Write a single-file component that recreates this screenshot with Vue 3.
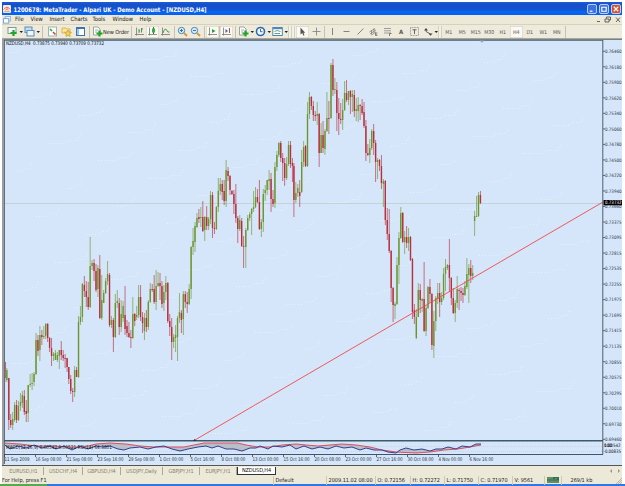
<template>
  <div class="screen">
    <div class="window">
      <!-- title bar -->
      <header class="titlebar">
        <svg class="app-icon" viewBox="0 0 9 9">
          <rect width="9" height="9" rx="1" fill="#f7e9e2" />
          <path d="M1 5 Q4.500 0 8 5 M3 6 L4.500 4 L6 6" fill="none" stroke="#e0604c" />
          <path d="M1.500 7.500 H7.500" stroke="#dba040" />
        </svg>
        <svg class="title" viewBox="0 0 260 13">
          <text x="0.500" y="9.500" textLength="193" lengthAdjust="spacingAndGlyphs">1200678: MetaTrader - Alpari UK - Demo Account - [NZDUSD,H4]</text>
        </svg>
        <div class="win-buttons">
          <span><svg viewBox="0 0 9 9"><path d="M2 7 H5" /></svg></span>
          <span><svg viewBox="0 0 9 9"><path d="M2 2.500 H7 V7 H2 Z" /></svg></span>
          <span class="close"><svg viewBox="0 0 9 9"><path d="M2 2 L7 7 M7 2 L2 7" /></svg></span>
        </div>
      </header>

      <!-- menu -->
      <nav class="menubar">
        <svg class="menu-icon" viewBox="0 0 9 9">
          <rect x="2.500" y="0.500" width="6" height="5" fill="#e8f2fc" stroke="#8cb4dc" />
          <rect x="0.500" y="3" width="6" height="5" fill="#fff" stroke="#6c9cd0" />
        </svg>
        <a v-for="m in menus" :key="m.name" :style="{ width: m.w + 'px' }">{{ m.name }}</a>
        <div class="mdi">
          <svg viewBox="0 0 30 9">
            <path d="M5 6.500 H8 M13 4 H17 V7 H13 Z M14.500 3.500 V2 H18.500 V5 H17 M24 2.500 L28 7 M28 2.500 L24 7" />
          </svg>
        </div>
      </nav>

      <!-- toolbar -->
      <div class="toolbar">
        <div
          v-for="(t, i) in tools"
          :key="i"
          class="tool"
          :class="{ active: t.on, sep: t.icon === 'sep', grip: t.icon === 'grip' }"
          :style="{ width: t.w + 'px' }"
        >
          <svg v-if="icons[t.icon]" :width="t.drop ? 16 : 11" height="11" :viewBox="t.drop ? '0 0 16 11' : '0 0 11 11'">
            <g v-html="icons[t.icon]"></g>
            <path v-if="t.drop" d="M12.500 5 h3.500 l-1.750 2 z" fill="#222" />
          </svg>
          <span v-if="t.text" :class="{ order: t.icon, letter: t.text === 'A' }">{{ t.text }}</span>
        </div>
      </div>

      <!-- chart -->
      <main class="chart">
        <svg width="619" height="426" viewBox="3 39 619 426">
          <rect x="4" y="40" width="618" height="425" fill="#d6e6fa" />
          <path v-for="(d, i) in dither" :key="'n' + i" :d="d" class="dither" />
          <path d="M5 203.500 H603" stroke="#c3d3d3" />

          <g v-for="(c, i) in candles" :key="i" :class="c.up ? 'up' : 'down'">
            <path :d="`M${c.x} ${c.h} V${c.l}`" class="wick" />
            <path :d="`M${c.x} ${c.top} V${c.bottom}`" class="body" />
          </g>

          <path d="M195 440 L603 202" stroke="#f04848" stroke-width="0.9" fill="none" />

          <!-- indicator -->
          <path :d="macdArea" fill="#b9bdc8" />
          <path d="M5 446.500 H603 M5 451.500 H603" stroke="#bfc9d8" stroke-width="0.6" stroke-dasharray="1 1" />
          <polyline :points="signal" fill="none" stroke="#e04050" stroke-width="0.9" />
          <polyline :points="macd" fill="none" stroke="#33408c" stroke-width="1" />
          <text x="6" y="448.500" class="axis dark" textLength="106" lengthAdjust="spacingAndGlyphs">MACD(12,26,9) 0.00542 0.00521 RSI(14) 64.3801</text>
          <text x="6" y="45.300" class="axis dark" textLength="98" lengthAdjust="spacingAndGlyphs">NZDUSD,H4&#160; 0.73875 0.73940 0.73709 0.73732</text>

          <!-- frame -->
          <path d="M4.500 40 V464" stroke="#607080" />
          <path d="M4 39.500 H622" stroke="#75828e" />
          <path d="M4 40.500 H603" stroke="#4b6474" stroke-width="0.8" />
          <path d="M602.800 40 V454.500" stroke="#4a6070" stroke-width="1" />
          <path d="M4 440.700 H603" stroke="#3c5a68" stroke-width="1.500" />
          <path d="M4 454.500 H603" stroke="#40566a" />
          <path d="M479.500 40.500 h5 l-2.500 2.300 z" fill="#98a8b4" />
          <path d="M193 441 l1.500 -2 l2 2 z" fill="#333" />

          <g v-for="(p, i) in prices" :key="p">
            <path :d="`M603 ${51.3 + i * 15.52} h2`" stroke="#445" stroke-width="0.8" />
            <text x="605" :y="53.1 + i * 15.52" class="axis price" textLength="16.500" lengthAdjust="spacingAndGlyphs">{{ p }}</text>
          </g>
          <rect x="603.500" y="200" width="18.500" height="5.300" fill="#000" />
          <text x="605" y="204.300" class="axis price light" textLength="16.500" lengthAdjust="spacingAndGlyphs">0.73732</text>
          <text x="604" y="447.300" class="axis price dark" textLength="16.500" lengthAdjust="spacingAndGlyphs">0.00542</text>
          <text x="604" y="446.500" class="axis price dark" textLength="8" lengthAdjust="spacingAndGlyphs">100</text>
          <text x="603.500" y="453" class="axis price dark" textLength="17.500" lengthAdjust="spacingAndGlyphs">-0.00835</text>

          <g v-for="(d, i) in dates" :key="d">
            <path :d="`M${4.5 + i * 31} 454 v3`" stroke="#445" stroke-width="0.8" />
            <text :x="4.5 + i * 31" y="461.300" class="axis" :textLength="i === 0 ? 25 : d.length * 2.17" lengthAdjust="spacingAndGlyphs">{{ d }}</text>
          </g>
        </svg>
      </main>

      <!-- chart tabs -->
      <div class="tabs">
        <div v-for="t in tabs" :key="t.name" class="tab" :class="{ current: t.on }" :style="{ width: t.w + 'px' }">
          <span>{{ t.name }}</span>
        </div>
        <svg class="scroll" viewBox="0 0 14 8"><path d="M4 2 L2 4 L4 6 Z M10 2 L12 4 L10 6 Z" /></svg>
      </div>

      <!-- status bar -->
      <footer class="status">
        <div v-for="s in status" :key="s.text" class="cell" :style="{ width: s.w + 'px' }">{{ s.text }}</div>
        <div class="cell bars">
          <svg viewBox="0 0 12 6">
            <rect width="12" height="6" fill="#2e7058" />
            <path d="M1 0 V6 M3 0 V6 M5 0 V6 M7 2 V6 M9 1 V6 M11 3 V6" stroke="#a4c860" stroke-width="0.8" />
            <path d="M0 3 H12" stroke="#30507c" stroke-width="0.7" />
          </svg>
        </div>
        <div class="cell traffic">269/1 kb</div>
        <svg class="resize" viewBox="0 0 7 7"><path d="M1 7 L7 1 M3 7 L7 3 M5 7 L7 5" /></svg>
      </footer>
    </div>
    <div class="taskbar"><i></i></div>
  </div>
</template>

<script setup>
const menus = [
  { name: 'File', w: 15.5 },
  { name: 'View', w: 19 },
  { name: 'Insert', w: 21 },
  { name: 'Charts', w: 22 },
  { name: 'Tools', w: 20 },
  { name: 'Window', w: 27 },
  { name: 'Help', w: 20 }
]

const axisIcon = '<path d="M2.500 1.500 V9.500 M1 8.500 H10" stroke="#777" fill="none" stroke-width="0.800"/>'
const lens = '<circle cx="4.500" cy="4.500" r="3.200" fill="#d4ecfa" stroke="#4e88b8"/><path d="M7 7 L10 10" stroke="#d09a38" stroke-width="1.800"/>'

const icons = {
  newChart: '<rect x="1" y="1.500" width="8" height="6" fill="#f4faff" stroke="#7d9a90"/><path d="M6.500 4 V10 M3.500 7 H9.500" stroke="#22a32c" stroke-width="2.200"/>',
  profiles: '<rect x="1" y="1" width="7" height="5.500" fill="#c4dcf0" stroke="#5d8cb6"/><rect x="3" y="4.500" width="7" height="5.500" fill="#eef6ff" stroke="#5d8cb6"/>',
  market: '<rect x="1.500" y="1" width="8" height="9" fill="#fff" stroke="#9ab8ac"/><path d="M3 3 L5 5" stroke="#26a33c" stroke-width="1.600"/><path d="M6 6 L8.500 8.500" stroke="#d8443a" stroke-width="1.600"/>',
  navigator: '<path d="M1 2 H5 L6 3 H9 V7 H1 Z" fill="#ffe596" stroke="#caa038" stroke-width="0.700"/><path d="M7 4 L8 6 L10.500 6.300 L8.800 8 L9.200 10.500 L7 9.300 L5 10.500 L5.300 8 L3.500 6.300 L6 6 Z" fill="#f5cf45" stroke="#b9942c" stroke-width="0.600"/>',
  terminal: '<rect x="1.500" y="1.500" width="8" height="8" fill="#fff" stroke="#3a75b5"/><path d="M1.500 2.500 H9.500" stroke="#3a75b5"/><rect x="2" y="3" width="2" height="6" fill="#9cc4ec"/>',
  order: '<path d="M1.500 1 H6 L8 3 V9 H1.500 Z" fill="#fff" stroke="#80908a" stroke-width="0.800"/><path d="M3 4 H6 M3 6 H5" stroke="#888" stroke-width="0.700"/><path d="M7.500 4.500 V10.500 M4.500 7.500 H10.500" stroke="#22a32c" stroke-width="2.200"/>',
  bars: axisIcon + '<path d="M5 3 V7 M7.500 2 V6.500 M5 5 H6 M7.500 3 H9" stroke="#3b8b4a" stroke-width="0.900"/>',
  candle: axisIcon + '<path d="M6.500 1 V8" stroke="#2b7b34"/><rect x="5" y="2.500" width="3" height="4" fill="#35b044"/>',
  line: axisIcon + '<path d="M3 7 Q5 1 6.500 4 T9.500 6" stroke="#3b9b4a" fill="none"/>',
  zoomIn: lens + '<path d="M3 4.500 H6 M4.500 3 V6" stroke="#286898" stroke-width="0.900"/>',
  zoomOut: lens + '<path d="M3 4.500 H6" stroke="#286898" stroke-width="0.900"/>',
  scroll: axisIcon + '<path d="M5 3 L8.500 5 L5 7 Z" fill="#28a038"/>',
  shift: axisIcon + '<path d="M4.500 3 L7 5 L4.500 7 Z" fill="#3d6a9e"/><path d="M8.500 2 V7" stroke="#c04c48"/>',
  clock: '<circle cx="5.500" cy="5.500" r="4" fill="#eef7ff" stroke="#2a69b8" stroke-width="1.600"/><path d="M5.500 3 V5.700 H7.500" stroke="#345" fill="none" stroke-width="0.800"/>',
  template: '<rect x="0.800" y="1.500" width="9.500" height="8" fill="#fff" stroke="#4e86b8"/><path d="M1 2.500 H10" stroke="#4e86b8" stroke-width="1.400"/><path d="M2.500 5.500 L5 4.500 L8.500 5.500 M2.500 7.500 H8" stroke="#5a9a6a" fill="none" stroke-width="0.900"/>',
  cursor: '<path d="M3.500 1.500 V8.500 L5.200 7 L6.500 9.700 L7.500 9.200 L6.500 6.700 H8.200 Z" fill="#555"/>',
  cross: '<path d="M5.500 1.500 V9.500 M1.500 5.500 H9.500" stroke="#888" stroke-width="0.900"/>',
  vline: '<path d="M5.500 2 V9" stroke="#777" stroke-width="0.900"/>',
  hline: '<path d="M2.500 5.500 H8.500" stroke="#777" stroke-width="0.900"/>',
  trend: '<path d="M2.500 8.500 L8.500 2.500" stroke="#777" stroke-width="0.900"/>',
  channel: '<path d="M1.500 6 L7 2.500 M2 8 L8 4 M3.500 9 L8 6 M3.500 4 V8.500 M6 2.500 V7" stroke="#777" stroke-width="0.700"/><path d="M9.500 7 H7.500 V9.500 H9.500 M7.500 8.300 H9" stroke="#666" fill="none" stroke-width="0.700"/>',
  fibo: '<path d="M2 2.500 H9 M2 4.800 H9 M2 7 H9" stroke="#888" stroke-width="0.800"/><path d="M7.500 10 V7.500 H9.500" stroke="#666" fill="none" stroke-width="0.800"/>',
  label: '<rect x="1.500" y="1.500" width="8" height="8" fill="none" stroke="#888" stroke-width="0.800" stroke-dasharray="1 0.600"/><path d="M3.500 3.800 H7.500 M5.500 3.500 V8" stroke="#666"/>',
  arrows: '<path d="M4 2 L6 4.500 H2 Z M6.500 7.500 H10.500 L8.500 9.800 Z" fill="#444"/><path d="M4 4 V5.500 L8.500 8" stroke="#555" fill="none" stroke-width="0.900"/>'
}

const tools = [
  { icon: 'newChart', w: 17, drop: true },
  { icon: 'profiles', w: 17, drop: true },
  { icon: 'sep', w: 5 },
  { icon: 'market', w: 14 },
  { icon: 'navigator', w: 14 },
  { icon: 'terminal', w: 14 },
  { icon: 'sep', w: 4 },
  { icon: 'order', w: 39, text: 'New Order' },
  { icon: 'sep', w: 3 },
  { icon: 'bars', w: 13 },
  { icon: 'candle', w: 13, on: true },
  { icon: 'line', w: 13 },
  { icon: 'sep', w: 4 },
  { icon: 'zoomIn', w: 13 },
  { icon: 'zoomOut', w: 13 },
  { icon: 'sep', w: 4 },
  { icon: 'scroll', w: 13, on: true },
  { icon: 'sep', w: 1 },
  { icon: 'shift', w: 13, on: true },
  { icon: 'sep', w: 4 },
  { icon: 'order', w: 17, drop: true },
  { icon: 'clock', w: 17, drop: true },
  { icon: 'template', w: 17, drop: true },
  { icon: 'grip', w: 8 },
  { icon: 'cursor', w: 13, on: true },
  { icon: 'cross', w: 14 },
  { icon: 'sep', w: 3 },
  { icon: 'vline', w: 13 },
  { icon: 'hline', w: 14 },
  { icon: 'trend', w: 14 },
  { icon: 'channel', w: 13 },
  { icon: 'fibo', w: 14 },
  { text: 'A', w: 14 },
  { icon: 'label', w: 13 },
  { icon: 'arrows', w: 17, drop: true },
  { icon: 'grip', w: 4 },
  { text: 'M1', w: 13.5 },
  { text: 'M5', w: 13.5 },
  { text: 'M15', w: 13.5 },
  { text: 'M30', w: 13.5 },
  { text: 'H1', w: 13.5 },
  { text: 'H4', w: 13.5, on: true },
  { text: 'D1', w: 13.5 },
  { text: 'W1', w: 13.5 },
  { text: 'MN', w: 13.5 },
  { icon: 'sep', w: 3 }
]

// start x, then high/open/close/low for each bar (in chart pixels)
const step = 1.943
const series = [
  [4.9, '362,362,378,382 368,380,370,382 378,378,420,430 414,420,425,428 412,425,419,430 402,420,405,422 400,405,420,423 401,420,406,421 393,406,402,411 391,403,395,408 390,396,412,415 400,411,414,422 385,413,385,422 374,385,384,387 373,384,383,390 372,382,374,386'],
  [36, '333,374,340,375 335,340,351,356 326,350,335,361 330,335,337,345 326,337,336,339 323,336,324,339 323,324,338,342 337,338,348,352 338,348,356,366 352,356,354,361 350,360,353,360 352,360,355,362 350,356,350,369 341,350,355,360 350,355,358,361 354,358,359,368 358,358,367,372'],
  [68.8, '367,367,379,384 375,379,391,394 388,391,392,402 366,392,370,397 367,370,377,377 316,377,322,378 306,322,317,325 283,317,284,322 276,285,291,297 281,291,297,307 282,297,307,310 237,307,266,308 260,266,263,270 259,263,271,281 264,271,290,292 265,289,268,297'],
  [99.8, '255,269,318,319 275,318,300,320 290,303,293,303 278,293,281,294 261,281,274,285 273,275,325,327 316,325,320,328 318,320,337,352 294,337,303,338 290,303,301,308 298,303,327,335 300,327,314,332 301,318,306,322 286,315,329,335 320,326,333,337 322,333,337,338 330,337,338,348'],
  [132.8, '297,338,314,339 313,314,321,326 306,317,315,320 285,315,297,318 285,297,317,321 312,317,323,333 313,331,318,340 310,318,327,332 300,327,302,330 283,302,289,303 284,289,290,292 275,289,302,304 270,302,286,310 272,286,283,287 273,283,286,300 281,286,304,308 285,303,292,311 276,292,283,300'],
  [167.8, '282,283,321,323 314,321,327,336 318,327,342,360 334,342,337,348 325,338,335,352 316,337,318,361 293,318,312,323 310,313,320,333 291,319,294,335 291,294,302,308 292,302,304,313 284,304,289,305 246,289,247,299 228,247,241,255 222,242,226,252 213,227,218,228 209,217,219,223 207,218,217,227'],
  [202.8, '201,217,231,232 216,230,217,241 206,217,226,230 217,226,219,230 191,219,195,224 192,195,228,238 222,228,229,234 206,229,207,230 178,207,191,212 178,191,184,195 180,184,192,200 180,191,201,205 160,201,170,207 167,171,176,181 175,176,190,195 190,191,194,195 190,194,204,214 184,204,218,223 216,218,229,243 215,229,220,231 218,221,246,247 236,246,247,268'],
  [245.8, '228,247,230,268 215,230,218,231 212,218,214,221 208,214,209,235 191,209,207,212 187,207,197,208 189,197,202,203 180,202,229,230 219,229,222,237 189,222,194,232 185,193,190,201 180,190,180,195 170,181,179,190 173,179,199,212 190,199,204,207 162,203,167,208 151,167,155,171 142,155,143,157 141,143,158,162 153,158,163,181 158,163,178,186 157,178,164,180 141,164,145,166 141,145,164,168 158,163,166,182'],
  [293.9, '163,166,200,217 182,200,193,203 184,193,188,197 180,192,196,207 150,192,162,193 141,162,147,167 145,146,166,167 102,166,114,167 92,114,97,119 96,97,106,110 101,106,115,121 111,115,116,121 102,116,114,125 113,114,153,167 123,153,135,153 121,135,148,153 129,149,131,155 92,131,118,132 101,118,119,134'],
  [331, '63,118,65,119 59,65,90,96 78,90,89,94 82,90,113,131 98,113,119,135 103,119,120,124 99,120,110,130 81,110,93,111 80,93,100,102 91,100,91,105 90,91,97,114 90,97,94,112 90,95,111,117 98,111,109,121 97,111,105,122 104,105,106,120 99,106,113,115 102,112,126,128'],
  [365.9, '120,126,153,161 144,153,155,156 139,155,148,163 129,148,131,150 124,131,143,155 140,143,162,182 158,162,160,179 159,160,166,171 155,166,183,189 179,184,181,207 180,181,220,225 208,220,234,240 209,234,251,253 250,251,288,302 287,288,305,322 302,306,304,319 257,304,265,305 232,265,238,284'],
  [400.8, '207,238,213,239 212,213,242,243 231,242,237,254 226,237,243,248 228,243,237,251 236,237,260,261 258,259,312,319 304,310,317,324 309,338,317,339 283,317,290,317 284,290,300,313 298,301,299,312 262,299,331,332 306,331,308,336 286,308,287,309 279,287,294,303'],
  [431.9, '293,294,345,350 311,346,321,358 296,321,298,331 283,299,293,304 283,293,302,317 292,302,298,305 268,298,274,300 259,274,267,291 264,268,265,270 239,265,278,292 277,278,298,305 288,298,313,314 300,313,303,322 276,303,289,308 288,290,291,310 287,291,293,301 288,293,295,303 281,295,286,296 258,287,274,289 264,275,268,303 260,268,276,283 265,276,273,280'],
  [474.6, '211,221,216,236 196,217,216,217 192,216,195,217 191,195,203,204']
]

const candles = series.flatMap(([x0, rows]) =>
  rows.split(' ').map((row, i) => {
    const [h, o, c, l] = row.split(',').map(Number)
    return {
      x: +(x0 + i * step).toFixed(2),
      h,
      l,
      top: Math.min(o, c),
      bottom: Math.max(o, c, Math.min(o, c) + 1),
      up: c < o
    }
  })
)

const prices = [
  '0.76460', '0.76180', '0.75900', '0.75620', '0.75340', '0.75060', '0.74780', '0.74500', '0.74220',
  '0.73940', '0.73660', '0.73375', '0.73095', '0.72815', '0.72535', '0.72255', '0.71975', '0.71695',
  '0.71415', '0.71135', '0.70855', '0.70575', '0.70295', '0.70010', '0.69730', '0.69460'
]

const dates = [
  '11 Sep 2009', '16 Sep 08:00', '21 Sep 08:00', '23 Sep 16:00', '29 Sep 08:00', '1 Oct 00:00',
  '5 Oct 16:00', '8 Oct 08:00', '13 Oct 00:00', '15 Oct 16:00', '20 Oct 08:00', '23 Oct 00:00',
  '27 Oct 16:00', '30 Oct 08:00', '4 Nov 00:00', '6 Nov 16:00'
]

const macd = '5,445 10,449 18,446 26,448 34,445 42,448 50,446 56,449 64,446 72,450 80,446 88,449 96,446 102,447 110,446 118,449 124,450 130,448 140,447 148,449 156,447 164,446 172,449 180,451 188,449 198,447 206,446 212,448 218,446 226,449 234,449 242,451 250,448 256,448 260,446 268,449 273,446 282,447 290,445 296,449 304,446 312,449 320,447 328,449 336,446 344,448 352,447 360,450 366,448 374,450 382,450 388,452 396,453 400,450 406,448 414,450 422,449 430,451 436,449 442,449 448,447 456,449 462,446 470,447 476,444 481,444'
const signal = '5,443 20,444 36,446 52,446 70,447 84,447 96,444 110,443 126,444 140,446 154,447 170,447 184,447 194,445 204,443 220,443 238,443 246,445 258,447 270,447 282,445 296,444 306,445 318,446 330,445 342,444 356,445 370,447 382,450 396,452 416,453 430,452 444,450 458,449 470,447 481,445'
const macdArea = `M${macd.replaceAll(' ', ' L')} L${signal.split(' ').reverse().join(' L')} Z`

// faint dotted contour traces over the background
const dither = Array.from({ length: 110 }, (_, i) => {
  const x = 10 + Math.floor(((i * 0.618034) % 1) * 555)
  const y = 52 + Math.floor(i * 3.5)
  const w = 5 + ((i * 7) % 17)
  return `M${x} ${y}.5 h${w} l4 -3 h${w / 2} l3 -6`
})

const tabs = [
  { name: 'EURUSD,H1', w: 40 },
  { name: 'USDCHF,H4', w: 39 },
  { name: 'GBPUSD,H4', w: 38 },
  { name: 'USDJPY,Daily', w: 42 },
  { name: 'GBPJPY,H1', w: 37 },
  { name: 'EURJPY,H1', w: 37 },
  { name: 'NZDUSD,H4', w: 39, on: true }
]

const status = [
  { text: 'For Help, press F1', w: 271.5 },
  { text: 'Default', w: 53 },
  { text: '2009.11.02 08:00', w: 49 },
  { text: 'O: 0.72156', w: 35 },
  { text: 'H: 0.72272', w: 34 },
  { text: 'L: 0.71750', w: 34 },
  { text: 'C: 0.71970', w: 34 },
  { text: 'V: 9561', w: 32 }
]
</script>

<style>
body {
  margin: 0;
  background: #fff;
}
</style>

<style scoped>
.screen {
  width: 625px;
  height: 486px;
  padding-top: 2px;
  box-sizing: border-box;
  overflow: hidden;
  background: #fff;
  font-family: "DejaVu Sans Condensed", "Noto Sans", sans-serif;
  color: #222;
}

.window {
  width: 620px;
  height: 482px;
  margin-left: 2px;
  display: flex;
  flex-direction: column;
  background: #ece9d8;
}

.window > * {
  flex-shrink: 0;
}

.titlebar {
  height: 13px;
  display: flex;
  align-items: center;
  background: linear-gradient(#1a5edb, #1650c8 20%, #1555cf 60%, #0566fa 75%, #0560ee 95%);
}

.app-icon {
  width: 8px;
  height: 8px;
  margin: 0 2px 0 1px;
}

.title {
  width: 260px;
  height: 13px;
  fill: #fff;
  font: bold 6.3px "DejaVu Sans Condensed", sans-serif;
}

.win-buttons {
  margin-left: auto;
  display: flex;
  gap: 2px;
  padding-right: 1px;
}

.win-buttons span {
  width: 10px;
  height: 10px;
  box-sizing: border-box;
  border: 1px solid #b9cff8;
  border-radius: 2px;
  background: #3c73e4;
  display: flex;
}

.win-buttons .close {
  background: #d9502e;
}

.win-buttons path {
  fill: none;
  stroke: #fff;
  stroke-width: 1.3;
}

.menubar {
  height: 9px;
  display: flex;
  align-items: center;
  font-size: 5.8px;
  line-height: 9px;
}

.menu-icon {
  width: 8px;
  height: 8px;
  margin: 0 4px 0 1px;
}

.menubar a {
  white-space: nowrap;
}

.mdi {
  margin-left: auto;
  width: 30px;
  height: 9px;
  display: flex;
}

.mdi path {
  fill: none;
  stroke: #555;
  stroke-width: 0.9;
}

.toolbar {
  height: 15px;
  box-sizing: border-box;
  border-top: 1px solid #d8d2bd;
  border-bottom: 1px solid #aaa797;
  padding-left: 4px;
  display: flex;
  align-items: center;
  background: #eeebdc;
}

.tool {
  height: 12px;
  flex-shrink: 0;
  display: flex;
  align-items: center;
  justify-content: center;
  font-size: 5.3px;
  color: #555;
  white-space: nowrap;
}

.order {
  font-size: 5.6px;
  letter-spacing: -0.1px;
  color: #222;
}

.letter {
  font-size: 6px;
  font-weight: bold;
}

.active {
  background: #faf9f4;
  box-shadow: inset 0 0 0 0.5px #c9c6b6;
}

.sep {
  background: linear-gradient(90deg, #c5c2b2, #c5c2b2) center / 1px 100% no-repeat;
}

.grip {
  background: repeating-linear-gradient(90deg, #d3d0c0 0 1px, #f3f1e7 1px 3px);
}

.chart {
  height: 426px;
  padding-left: 1px;
  background: #9a9e9e;
}

.chart svg {
  display: block;
}

.dither {
  fill: none;
  stroke: #e4f8ff;
  stroke-width: 0.8;
  stroke-dasharray: 1 2;
}

.wick {
  stroke-width: 0.65;
}

.body {
  stroke-width: 1.4;
}

.up path {
  stroke: #6c962d;
}

.down path {
  stroke: #b72f3c;
}

.axis {
  font: 5px "DejaVu Sans Condensed", sans-serif;
  fill: #2a3440;
}

.price {
  font-size: 4.6px;
}

.dark {
  fill: #111;
}

.light {
  fill: #fff;
}

.tabs {
  height: 9px;
  padding-left: 2px;
  display: flex;
  align-items: center;
  border-top: 1px solid #555;
  font-size: 5.5px;
  line-height: 8px;
  color: #85826f;
}

.tab {
  height: 8px;
  box-sizing: border-box;
  flex-shrink: 0;
  display: flex;
  justify-content: center;
  border-right: 1px solid #aaa797;
  white-space: nowrap;
}

.tab span {
  letter-spacing: -0.1px;
}

.current {
  background: #fff;
  color: #111;
  border: 1px solid #333;
  border-top: 0;
  line-height: 7px;
}

.scroll {
  width: 14px;
  height: 8px;
  margin-left: auto;
  fill: #999688;
}

.status {
  height: 10px;
  display: flex;
  align-items: center;
  font-size: 5.5px;
  line-height: 9px;
}

.cell {
  height: 9px;
  box-sizing: border-box;
  flex-shrink: 0;
  padding-left: 2px;
  border-right: 1px solid #cbc8b8;
  white-space: nowrap;
}

.cell:first-child {
  padding-left: 0;
}

.bars {
  width: 17px;
  display: flex;
  align-items: center;
}

.bars svg {
  width: 12px;
  height: 6px;
}

.traffic {
  border: 0;
  padding-left: 9px;
}

.resize {
  width: 7px;
  height: 7px;
  margin-left: auto;
  stroke: #aaa797;
  stroke-width: 0.8;
}

.taskbar {
  height: 2px;
  background: #2f78e2;
}

.taskbar i {
  display: block;
  width: 47px;
  height: 2px;
  background: #55aa50;
}
</style>
